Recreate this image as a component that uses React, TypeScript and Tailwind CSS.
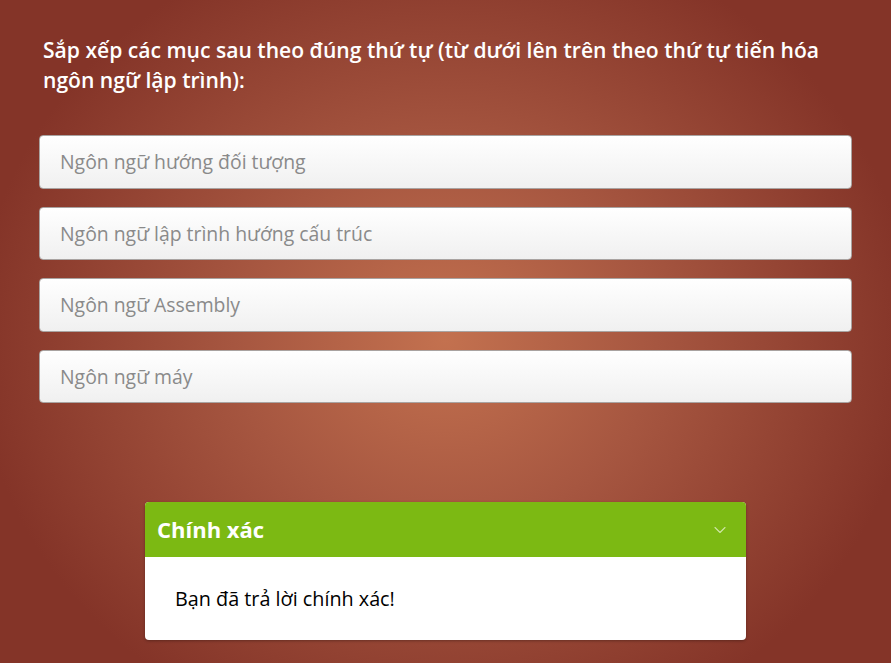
import { ChevronDown } from 'lucide-react';

const items = [
  'Ngôn ngữ hướng đối tượng',
  'Ngôn ngữ lập trình hướng cấu trúc',
  'Ngôn ngữ Assembly',
  'Ngôn ngữ máy',
];

export default function App() {
  return (
    <div className="min-h-[663px] w-full bg-[radial-gradient(ellipse_470px_420px_at_445px_340px,#c3714f_0%,#a65640_45%,#843428_100%)] font-['Open_Sans',sans-serif] pt-[35px]">
      <div className="mx-[39px]">
        <h1 className="px-[4px] text-[21.1px] leading-[30px] font-semibold text-white">
          Sắp xếp các mục sau theo đúng thứ tự (từ dưới lên trên theo thứ tự tiến hóa ngôn ngữ lập trình):
        </h1>
        <div className="mt-[40px] flex flex-col gap-[18px]">
          {items.map((t) => (
            <div
              key={t}
              className="flex h-[53.5px] items-center rounded-[4px] border border-[#a9a3a1] bg-gradient-to-b from-white to-[#f0f0f0] px-[20px] text-[19.4px] text-[#8a8a8a]"
            >
              {t}
            </div>
          ))}
        </div>
      </div>
      <div className="mx-auto mt-[99px] w-[601px] overflow-hidden rounded-[4px] bg-white shadow-[0_1px_3px_rgba(0,0,0,0.3)]">
        <div className="flex h-[55px] items-center justify-between bg-[#7cb913] pl-[12px] pr-[16px]">
          <span className="text-[22px] font-bold text-white">Chính xác</span>
          <ChevronDown className="h-[20px] w-[20px] text-[#cfe6a6]" strokeWidth={1.3} />
        </div>
        <div className="px-[30px] py-[29.5px] text-[19.8px] leading-[24px] text-black">
          Bạn đã trả lời chính xác!
        </div>
      </div>
    </div>
  );
}
